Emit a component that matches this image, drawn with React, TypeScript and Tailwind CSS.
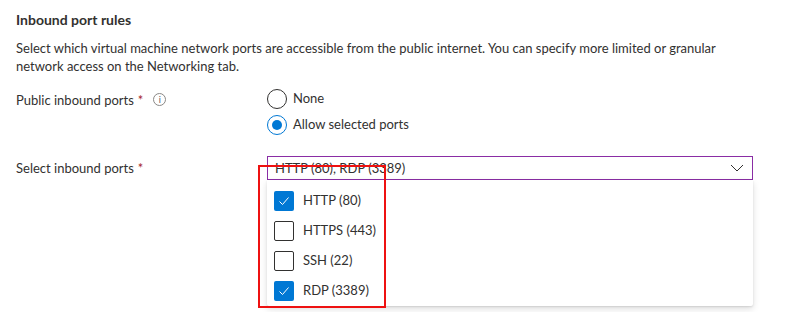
import React from "react";

const font = { fontFamily: '"Segoe UI", Lato, "Open Sans", sans-serif' };

function Check({ checked }: { checked: boolean }) {
  return checked ? (
    <div className="w-5 h-5 rounded-[2px] bg-[#0078d4] flex items-center justify-center">
      <svg width="12" height="12" viewBox="0 0 12 12" fill="none">
        <path d="M1.5 6.5 L4.5 9.5 L10.5 2.5" stroke="#ffffff" strokeWidth="1" />
      </svg>
    </div>
  ) : (
    <div className="w-5 h-5 rounded-[2px] border border-[#323130] bg-white" />
  );
}

export default function App() {
  const items = [
    { label: "HTTP (80)", checked: true },
    { label: "HTTPS (443)", checked: false },
    { label: "SSH (22)", checked: false },
    { label: "RDP (3389)", checked: true },
  ];
  return (
    <div className="w-[789px] h-[312px] bg-white text-[#323130] text-[13px] overflow-hidden" style={font}>
      <div className="pl-4 pt-[10px]">
        <div className="text-[14px] leading-[20px] font-bold">Inbound port rules</div>
        <div className="mt-[9px] leading-[18px] w-[730px]">
          Select which virtual machine network ports are accessible from the public internet. You can specify more limited or granular network access on the Networking tab.
        </div>
        <div className="flex mt-[14px]">
          <div className="w-[251px] flex items-start pt-[2px] leading-[18px]">
            <span>Public inbound ports</span>
            <span className="text-[#a4262c] ml-[4px]">*</span>
            <span className="ml-[10px] mt-[2px] w-[13px] h-[13px] rounded-full border border-[#8a8886] text-[#605e5c] text-[9px] leading-[11px] flex items-center justify-center">i</span>
          </div>
          <div className="flex flex-col gap-[6px]">
            <div className="flex items-center gap-[6px] h-5">
              <div className="w-5 h-5 rounded-full border border-[#323130]" />
              <span>None</span>
            </div>
            <div className="flex items-center gap-[6px] h-5">
              <div className="w-5 h-5 rounded-full border border-[#0078d4] flex items-center justify-center">
                <div className="w-[10px] h-[10px] rounded-full bg-[#0078d4]" />
              </div>
              <span>Allow selected ports</span>
            </div>
          </div>
        </div>
        <div className="flex mt-[21px]">
          <div className="w-[251px] leading-[24px]">
            <span>Select inbound ports</span>
            <span className="text-[#a4262c] ml-[4px]">*</span>
          </div>
          <div className="relative w-[486px]">
            <div className="h-6 border border-[#8a2da5] flex items-center justify-between pl-[7px] pr-[8px]">
              <span className="leading-[18px]">HTTP (80), RDP (3389)</span>
              <svg width="14" height="8" viewBox="0 0 14 8" fill="none">
                <path d="M1 1 L7 7 L13 1" stroke="#323130" strokeWidth="1" />
              </svg>
            </div>
            <div className="absolute left-0 top-6 w-[486px] h-[126px] bg-white rounded-b-[2px] shadow-[0_3px_7px_rgba(0,0,0,0.13),0_1px_2px_rgba(0,0,0,0.1)] flex flex-col pt-[6px]">
              {items.map((it) => (
                <div key={it.label} className="h-8 flex items-center pl-[7px] gap-[9px]">
                  <Check checked={it.checked} />
                  <span>{it.label}</span>
                </div>
              ))}
            </div>
            <div className="absolute left-[-9px] top-[9px] w-[128px] h-[143px] border-2 border-[#ee1111] pointer-events-none" />
          </div>
        </div>
      </div>
    </div>
  );
}
